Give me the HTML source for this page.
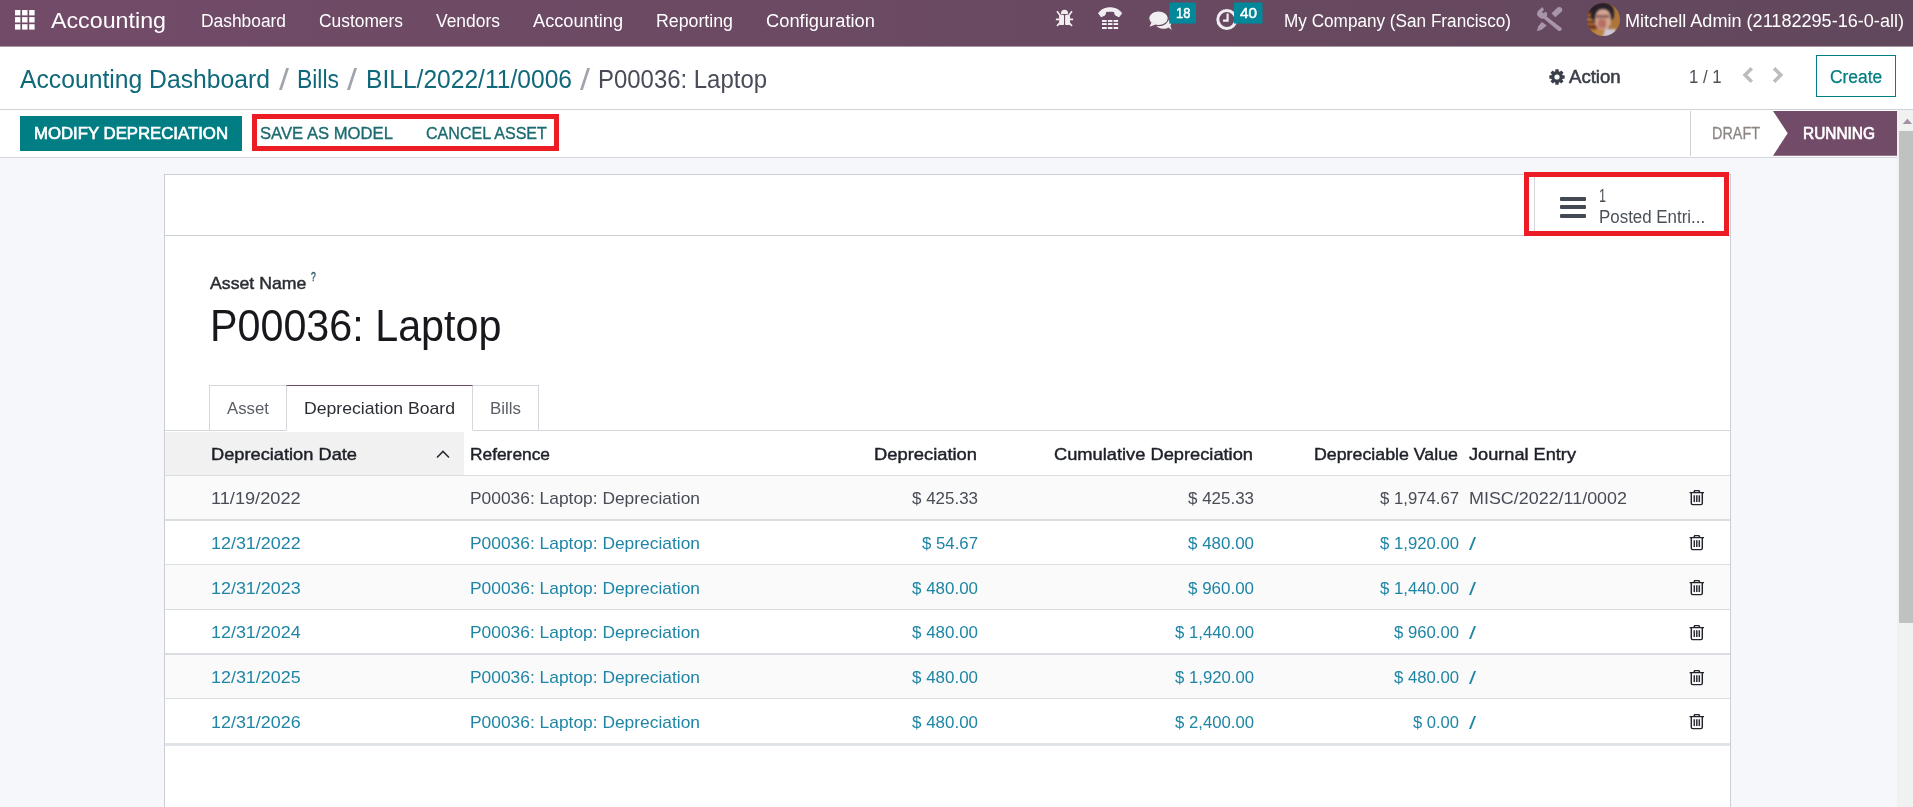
<!DOCTYPE html>
<html><head><meta charset="utf-8"><title>Odoo - P00036: Laptop</title>
<style>
*{box-sizing:border-box;margin:0;padding:0}
html,body{width:1913px;height:807px;overflow:hidden;background:#f6f7fa;font-family:"Liberation Sans",sans-serif;position:relative}
.a{position:absolute}
.t{position:absolute;white-space:pre;transform-origin:0 50%;font-family:"Liberation Sans",sans-serif}
#nav{left:0;top:0;width:1913px;height:46px;background:linear-gradient(90deg,#724b68 0%,#62485c 100%)}
#cp{left:0;top:47px;width:1913px;height:62px;background:#fff}
#navedge{left:0;top:46px;width:1913px;height:1px;background:linear-gradient(90deg,#ae98a8,#a697a3)}
#cpline{left:0;top:109px;width:1913px;height:1px;background:#d0d2d8}
#sb{left:0;top:110px;width:1897px;height:47px;background:#fff}
#sbline{left:0;top:157px;width:1897px;height:1px;background:#d5d7dc}
#btn1{left:20px;top:116px;width:221.8px;height:35px;background:#017e84}
#red1{left:252px;top:114px;width:307px;height:37px;border:5px solid #ec1c24}
#create{left:1816px;top:55px;width:80px;height:42px;border:1.5px solid #017e84;background:#fff}
#sbsep{left:1690px;top:111px;width:1px;height:45px;background:#d0d2d8}
#sheet{left:164.2px;top:174px;width:1566.8px;height:640px;background:#fff;border:1px solid #cbced5}
#bbline{left:165px;top:234.7px;width:1565px;height:1.2px;background:#cbced5}
#statsep{left:1534.3px;top:175px;width:1px;height:60px;background:#d5d7dc}
#red2{left:1524px;top:172px;width:205px;height:63.5px;border:5px solid #ec1c24}
.bar{left:1560.4px;width:25.8px;height:4px;background:#444a54;border-radius:1px}
#scroll{left:1897px;top:110px;width:16px;height:697px;background:#f1f1f1}
#thumb{left:1899px;top:131.2px;width:14px;height:491.4px;background:#c1c1c1}
.tab{top:385px;height:46.4px;border:1px solid #d5d7dc;background:#fff}
#tabline{left:165px;top:430.4px;width:1565px;height:1px;background:#d5d7dc}
#thbg{left:165px;top:431.5px;width:299px;height:43px;background:#f1f1f1}
.rl{left:165px;width:1565px;background:#dadde1}
.rb{left:165px;width:1565px;background:#fafafa}

</style></head>
<body>
<div class="a" id="nav"></div>
<div class="a" id="cp"></div>
<div class="a" id="navedge"></div>
<div class="a" id="cpline"></div>
<div class="a" id="sb"></div>
<div class="a" id="sbline"></div>
<div class="a" id="scroll"></div>
<div class="a" id="thumb"></div>
<svg class="a" style="left:1897px;top:110px" width="16" height="22" viewBox="0 0 16 22"><path d="M5.7 14 L10.4 8.8 L15.1 14 Z" fill="#a291a4"/></svg>
<!-- grid icon -->
<svg class="a" style="left:14.5px;top:9.5px" width="20" height="20" viewBox="0 0 20 20" fill="#fff">
<rect x="0" y="0" width="5.4" height="5.4"/><rect x="7.1" y="0" width="5.4" height="5.4"/><rect x="14.2" y="0" width="5.4" height="5.4"/>
<rect x="0" y="7.1" width="5.4" height="5.4"/><rect x="7.1" y="7.1" width="5.4" height="5.4"/><rect x="14.2" y="7.1" width="5.4" height="5.4"/>
<rect x="0" y="14.2" width="5.4" height="5.4"/><rect x="7.1" y="14.2" width="5.4" height="5.4"/><rect x="14.2" y="14.2" width="5.4" height="5.4"/>
</svg>
<div class="a" id="btn1"></div>
<div class="a" id="red1"></div>
<div class="a" id="create"></div>
<div class="a" id="sbsep"></div>
<!-- running arrow -->
<svg class="a" style="left:1773px;top:111px" width="124" height="45" viewBox="0 0 124 45"><path d="M0 0 H124 V44.7 H0 L14.7 22.3 Z" fill="#714b67"/></svg>
<div class="a" id="sheet"></div>
<div class="a" id="bbline"></div>
<div class="a" id="statsep"></div>
<div class="a bar" style="top:197px"></div>
<div class="a bar" style="top:205px"></div>
<div class="a bar" style="top:214px"></div>
<div class="a" id="red2"></div>
<!-- tabs -->
<div class="a tab" style="left:209px;width:78px"></div>
<div class="a tab" style="left:472px;width:66.7px"></div>
<div class="a" id="tabline"></div>
<div class="a tab" style="left:286px;width:187px;border-top:1.5px solid #714b67;border-bottom:1px solid #fff"></div>
<div class="a" id="thbg"></div>
<svg class="a" style="left:435px;top:446.6px" width="16" height="14" viewBox="0 0 16 14"><path d="M2 10.5 L8 4.5 L14 10.5" fill="none" stroke="#2a2d33" stroke-width="1.6"/></svg>
<!-- rows -->
<div class="a rb" style="top:476px;height:43px"></div>
<div class="a rb" style="top:565px;height:44px"></div>
<div class="a rb" style="top:655px;height:44px"></div>
<div class="a rl" style="top:475px;height:1px"></div>
<div class="a rl" style="top:518.6px;height:2px"></div>
<div class="a rl" style="top:564px;height:1px"></div>
<div class="a rl" style="top:609px;height:1px"></div>
<div class="a rl" style="top:653px;height:2px"></div>
<div class="a rl" style="top:698px;height:1px"></div>
<div class="a rl" style="top:743px;height:3.2px;background:#e0e3e8"></div>
<!-- NAV ICONS: drawn in page pixel coords using one overlay svg -->
<svg class="a" style="left:1040px;top:0" width="600" height="46" viewBox="1040 0 600 46">
 <!-- bug -->
 <g fill="#f1eef1" stroke="none">
  <path d="M1060.9 14 a3.6 4.2 0 0 1 7.2 0 z"/>
  <rect x="1059.1" y="14.7" width="4.9" height="10.4" rx="1.2"/>
  <rect x="1065.1" y="14.7" width="4.9" height="10.4" rx="1.2"/>
 </g>
 <g stroke="#f1eef1" stroke-width="1.7" stroke-linecap="butt" fill="none">
  <path d="M1055.9 19.3 H1059.5 M1069.5 19.3 H1073.1"/>
  <path d="M1057 11.2 L1060 15.2 M1072 11.2 L1069 15.2"/>
  <path d="M1057 26 L1060 22.6 M1072 26 L1069 22.6"/>
 </g>
 <!-- phone -->
 <path d="M1098.6 13.2 C1103 6 1117 6 1121.6 13.2 L1119 16.8 L1115.2 14.9 L1114.5 11.8 C1112 10.9 1108.2 10.9 1105.6 11.8 L1105 14.9 L1101.2 16.8 Z" fill="#f1eef1" stroke="#f1eef1" stroke-width="1" stroke-linejoin="round"/>
 <g fill="#f6f3f6">
  <rect x="1102" y="20" width="4.7" height="1.9"/><rect x="1107.9" y="20" width="4.5" height="1.9"/><rect x="1113.6" y="20" width="4.5" height="1.9"/>
  <rect x="1102" y="23.1" width="4.7" height="1.9"/><rect x="1107.9" y="23.1" width="4.5" height="1.9"/><rect x="1113.6" y="23.1" width="4.5" height="1.9"/>
  <rect x="1102" y="27" width="4.7" height="2"/><rect x="1107.9" y="27" width="4.5" height="2"/><rect x="1113.6" y="27" width="4.5" height="2"/>
 </g>
 <!-- chat bubbles -->
 <g fill="#f1eef1">
  <path d="M1156 24.5 C1156 28.5 1165 30 1168.5 27.5 L1171.8 30 L1170.4 26 C1172.5 23 1170 19.5 1166 19 Z"/>
  <ellipse cx="1158.5" cy="18.2" rx="9.8" ry="7.4" stroke="#65495e" stroke-width="1.2"/>
  <path d="M1151.5 22.5 L1149.6 26.7 L1155.5 24.6 Z"/>
 </g>
 <!-- clock -->
 <circle cx="1226.8" cy="19.5" r="9" fill="none" stroke="#f1eef1" stroke-width="3"/>
 <path d="M1227.6 13.6 V20.6 H1223" fill="none" stroke="#f1eef1" stroke-width="2.2"/>
 <!-- badges -->
 <rect x="1169.2" y="2.5" width="26.8" height="21.1" fill="#03879a"/>
 <rect x="1234" y="2.5" width="28.5" height="21.1" fill="#03879a"/>
 <!-- tools -->
 <g fill="#a995aa">
  <path d="M1539.5 9.5 L1542.5 7 L1544 9.8 L1542 12 L1543.5 13.3 L1546 11.5 C1547.2 13 1547.5 15.2 1546.6 16.6 L1561.6 28 C1562.6 29.6 1560.5 31.6 1558.6 31 L1543.6 18.6 C1541.2 19.4 1538.6 17.4 1537 14.8 C1536.8 12.8 1537.8 10.8 1539.5 9.5 Z"/>
  <path d="M1551.5 13.2 L1557.5 7.6 C1559 6.4 1561 7 1562 8.4 C1562.6 9.8 1562.2 11 1561 12.2 L1555.2 17.2 Z"/>
  <path d="M1541.8 22 L1546.8 25.6 L1541.6 29.8 L1536.8 31.2 L1538.4 26.2 Z"/>
 </g>
</svg>
<!-- avatar -->
<div class="a" style="left:1586.5px;top:3px;width:33.2px;height:33.2px;border-radius:50%;overflow:hidden;background:#7a4a30">
 <div class="a" style="left:-2px;top:-2px;width:38px;height:38px;filter:blur(0.9px)">
  <div class="a" style="left:0;top:0;width:13px;height:38px;background:linear-gradient(180deg,#3a1c1c 0 10px,#6a2a22 10px 13px,#a87840 13px 15.5px,#6a2a22 15.5px 17.5px,#a87840 17.5px 20px,#6a2a22 20px 22px,#a87840 22px 24px,#7a3524 24px 28px,#b07a38 28px 38px)"></div>
  <div class="a" style="left:25px;top:0;width:13px;height:38px;background:#ad7638"></div>
  <div class="a" style="left:6px;top:0.5px;width:23px;height:19px;background:#27202a;border-radius:50% 50% 25% 25%"></div>
  <div class="a" style="left:10.5px;top:8px;width:15.5px;height:22px;background:#d2a592;border-radius:42% 42% 48% 48%"></div>
  <div class="a" style="left:11.5px;top:14px;width:13px;height:2.6px;background:#5a2a2a;opacity:.55"></div>
  <div class="a" style="left:13.5px;top:17.5px;width:8px;height:9px;background:#9a3a34;border-radius:40%;opacity:.5"></div>
  <div class="a" style="left:18px;top:28px;width:11px;height:12px;background:#cfc7d6;transform:skewX(-18deg)"></div>
  <div class="a" style="left:9px;top:28px;width:9px;height:12px;background:#bd8448;transform:skewX(-18deg)"></div>
 </div>
</div>
<!-- gear -->
<svg class="a" style="left:1549px;top:68.5px" width="16" height="16" viewBox="-8 -8 16 16">
 <g fill="#3b3f49">
  <g id="tooth"><rect x="-1.7" y="-7.7" width="3.4" height="15.4" rx=".4"/></g>
  <rect x="-1.7" y="-7.7" width="3.4" height="15.4" rx=".4" transform="rotate(45)"/>
  <rect x="-1.7" y="-7.7" width="3.4" height="15.4" rx=".4" transform="rotate(90)"/>
  <rect x="-1.7" y="-7.7" width="3.4" height="15.4" rx=".4" transform="rotate(135)"/>
  <circle r="5.9"/>
 </g>
 <circle r="2.6" fill="#fff"/>
</svg>
<!-- chevrons -->
<svg class="a" style="left:1740px;top:64px" width="50" height="22" viewBox="1740 64 50 22">
 <path d="M1751.8 68.3 L1745 75 L1751.8 81.8" fill="none" stroke="#bcbcbc" stroke-width="3.5"/>
 <path d="M1774 68.3 L1780.8 75 L1774 81.8" fill="none" stroke="#bcbcbc" stroke-width="3.5"/>
</svg>
<svg class="a" style="left:1689px;top:489.2px" width="16" height="17" viewBox="0 0 16 17"><g fill="none" stroke="#22252c" stroke-width="1.45"><path d="M0.6 3.6 H15 M4.9 3.4 L5.7 1.6 H9.9 L10.7 3.4"/><path d="M2.3 4 V14.2 Q2.3 15.6 3.7 15.6 H11.9 Q13.3 15.6 13.3 14.2 V4"/></g><g stroke="#2a2d35" stroke-width="1.5"><path d="M5.3 6.3 V13 M7.8 6.3 V13 M10.3 6.3 V13"/></g></svg>
<svg class="a" style="left:1689px;top:534.3px" width="16" height="17" viewBox="0 0 16 17"><g fill="none" stroke="#22252c" stroke-width="1.45"><path d="M0.6 3.6 H15 M4.9 3.4 L5.7 1.6 H9.9 L10.7 3.4"/><path d="M2.3 4 V14.2 Q2.3 15.6 3.7 15.6 H11.9 Q13.3 15.6 13.3 14.2 V4"/></g><g stroke="#2a2d35" stroke-width="1.5"><path d="M5.3 6.3 V13 M7.8 6.3 V13 M10.3 6.3 V13"/></g></svg>
<svg class="a" style="left:1689px;top:579.2px" width="16" height="17" viewBox="0 0 16 17"><g fill="none" stroke="#22252c" stroke-width="1.45"><path d="M0.6 3.6 H15 M4.9 3.4 L5.7 1.6 H9.9 L10.7 3.4"/><path d="M2.3 4 V14.2 Q2.3 15.6 3.7 15.6 H11.9 Q13.3 15.6 13.3 14.2 V4"/></g><g stroke="#2a2d35" stroke-width="1.5"><path d="M5.3 6.3 V13 M7.8 6.3 V13 M10.3 6.3 V13"/></g></svg>
<svg class="a" style="left:1689px;top:623.5px" width="16" height="17" viewBox="0 0 16 17"><g fill="none" stroke="#22252c" stroke-width="1.45"><path d="M0.6 3.6 H15 M4.9 3.4 L5.7 1.6 H9.9 L10.7 3.4"/><path d="M2.3 4 V14.2 Q2.3 15.6 3.7 15.6 H11.9 Q13.3 15.6 13.3 14.2 V4"/></g><g stroke="#2a2d35" stroke-width="1.5"><path d="M5.3 6.3 V13 M7.8 6.3 V13 M10.3 6.3 V13"/></g></svg>
<svg class="a" style="left:1689px;top:668.5px" width="16" height="17" viewBox="0 0 16 17"><g fill="none" stroke="#22252c" stroke-width="1.45"><path d="M0.6 3.6 H15 M4.9 3.4 L5.7 1.6 H9.9 L10.7 3.4"/><path d="M2.3 4 V14.2 Q2.3 15.6 3.7 15.6 H11.9 Q13.3 15.6 13.3 14.2 V4"/></g><g stroke="#2a2d35" stroke-width="1.5"><path d="M5.3 6.3 V13 M7.8 6.3 V13 M10.3 6.3 V13"/></g></svg>
<svg class="a" style="left:1689px;top:713.3px" width="16" height="17" viewBox="0 0 16 17"><g fill="none" stroke="#22252c" stroke-width="1.45"><path d="M0.6 3.6 H15 M4.9 3.4 L5.7 1.6 H9.9 L10.7 3.4"/><path d="M2.3 4 V14.2 Q2.3 15.6 3.7 15.6 H11.9 Q13.3 15.6 13.3 14.2 V4"/></g><g stroke="#2a2d35" stroke-width="1.5"><path d="M5.3 6.3 V13 M7.8 6.3 V13 M10.3 6.3 V13"/></g></svg>

<span class="t" style="left:51px;top:5.8px;font-size:22.3px;line-height:29px;font-weight:400;color:#ffffff;transform:scaleX(1.0423);">Accounting</span>
<span class="t" style="left:200.5px;top:9.0px;font-size:18px;line-height:24px;font-weight:400;color:#ffffff;transform:scaleX(0.9652);">Dashboard</span>
<span class="t" style="left:319px;top:9.0px;font-size:18px;line-height:24px;font-weight:400;color:#ffffff;transform:scaleX(0.9652);">Customers</span>
<span class="t" style="left:436px;top:9.0px;font-size:18px;line-height:24px;font-weight:400;color:#ffffff;transform:scaleX(0.9688);">Vendors</span>
<span class="t" style="left:533px;top:9.0px;font-size:18px;line-height:24px;font-weight:400;color:#ffffff;transform:scaleX(1.0105);">Accounting</span>
<span class="t" style="left:656px;top:9.0px;font-size:18px;line-height:24px;font-weight:400;color:#ffffff;transform:scaleX(0.9866);">Reporting</span>
<span class="t" style="left:766px;top:9.0px;font-size:18px;line-height:24px;font-weight:400;color:#ffffff;transform:scaleX(1.0179);">Configuration</span>
<span class="t" style="left:1284px;top:9.0px;font-size:18px;line-height:24px;font-weight:400;color:#ffffff;transform:scaleX(0.9535);">My Company (San Francisco)</span>
<span class="t" style="left:1625px;top:9.0px;font-size:18px;line-height:24px;font-weight:400;color:#ffffff;transform:scaleX(1.0043);">Mitchell Admin (21182295-16-0-all)</span>
<span class="t" style="left:1176px;top:4.2px;font-size:14.5px;line-height:19px;font-weight:400;color:#ffffff;transform:scaleX(0.8860);-webkit-text-stroke:0.5px #fff;">18</span>
<span class="t" style="left:1239.8px;top:4.2px;font-size:14.5px;line-height:19px;font-weight:400;color:#ffffff;transform:scaleX(1.0532);-webkit-text-stroke:0.5px #fff;">40</span>
<span class="t" style="left:20px;top:62.6px;font-size:25px;line-height:32px;font-weight:400;color:#10697a;transform:scaleX(0.9883);">Accounting Dashboard</span>
<span class="t" style="left:279.3px;top:61.7px;font-size:29px;line-height:37px;font-weight:400;color:#a0a4ad;transform:scaleX(1.2403);">/</span>
<span class="t" style="left:297px;top:62.6px;font-size:25px;line-height:32px;font-weight:400;color:#10697a;transform:scaleX(0.9162);">Bills</span>
<span class="t" style="left:347.3px;top:61.7px;font-size:29px;line-height:37px;font-weight:400;color:#a0a4ad;transform:scaleX(1.2403);">/</span>
<span class="t" style="left:366px;top:62.6px;font-size:25px;line-height:32px;font-weight:400;color:#10697a;transform:scaleX(0.9835);">BILL/2022/11/0006</span>
<span class="t" style="left:580.3px;top:61.7px;font-size:29px;line-height:37px;font-weight:400;color:#a0a4ad;transform:scaleX(1.2403);">/</span>
<span class="t" style="left:598px;top:62.6px;font-size:25px;line-height:32px;font-weight:400;color:#484c58;transform:scaleX(0.9572);">P00036: Laptop</span>
<span class="t" style="left:1569.3px;top:66.1px;font-size:17.5px;line-height:23px;font-weight:400;color:#3a3e48;transform:scaleX(1.0629);-webkit-text-stroke:0.55px #3a3e48;">Action</span>
<span class="t" style="left:1688.8px;top:66.1px;font-size:17.5px;line-height:23px;font-weight:400;color:#4b4f58;transform:scaleX(0.9600);">1 / 1</span>
<span class="t" style="left:1830.2px;top:65.0px;font-size:18px;line-height:24px;font-weight:400;color:#017e84;transform:scaleX(0.9661);-webkit-text-stroke:0.25px #017e84;">Create</span>
<span class="t" style="left:34px;top:123.4px;font-size:16.9px;line-height:22px;font-weight:400;color:#fff;transform:scaleX(0.9922);-webkit-text-stroke:0.7px #fff;">MODIFY DEPRECIATION</span>
<span class="t" style="left:260.4px;top:123.4px;font-size:16.9px;line-height:22px;font-weight:400;color:#1c6a70;transform:scaleX(0.9854);-webkit-text-stroke:0.35px #1c6a70;">SAVE AS MODEL</span>
<span class="t" style="left:425.8px;top:123.4px;font-size:16.9px;line-height:22px;font-weight:400;color:#1c6a70;transform:scaleX(0.9516);-webkit-text-stroke:0.35px #1c6a70;">CANCEL ASSET</span>
<span class="t" style="left:1712px;top:123.4px;font-size:16.6px;line-height:22px;font-weight:400;color:#8c8682;transform:scaleX(0.8678);-webkit-text-stroke:0.3px #8c8682;">DRAFT</span>
<span class="t" style="left:1803px;top:123.4px;font-size:16.6px;line-height:22px;font-weight:400;color:#fff;transform:scaleX(0.9298);-webkit-text-stroke:0.7px #fff;">RUNNING</span>
<span class="t" style="left:1599.3px;top:185.0px;font-size:17.5px;line-height:23px;font-weight:400;color:#4b5058;transform:scaleX(0.7191);">1</span>
<span class="t" style="left:1599.3px;top:206.0px;font-size:17.5px;line-height:23px;font-weight:400;color:#4b5058;transform:scaleX(0.9661);">Posted Entri...</span>
<span class="t" style="left:209.6px;top:272.6px;font-size:17px;line-height:22px;font-weight:400;color:#2a2d33;transform:scaleX(1.0411);-webkit-text-stroke:0.45px #2a2d33;">Asset Name</span>
<span class="t" style="left:310.8px;top:269.3px;font-size:12.3px;line-height:17px;font-weight:400;color:#1f5560;transform:scaleX(0.7014);-webkit-text-stroke:0.35px #1f5560;">?</span>
<span class="t" style="left:209.7px;top:297.5px;font-size:44.4px;line-height:55px;font-weight:400;color:#16181c;transform:scaleX(0.9295);">P00036: Laptop</span>
<span class="t" style="left:227px;top:398.0px;font-size:17px;line-height:22px;font-weight:400;color:#5a5f66;transform:scaleX(0.9875);">Asset</span>
<span class="t" style="left:304px;top:398.0px;font-size:17px;line-height:22px;font-weight:400;color:#2a2d33;transform:scaleX(1.0376);">Depreciation Board</span>
<span class="t" style="left:490px;top:398.0px;font-size:17px;line-height:22px;font-weight:400;color:#5a5f66;transform:scaleX(0.9945);">Bills</span>
<span class="t" style="left:211px;top:443.6px;font-size:17px;line-height:22px;font-weight:400;color:#1e2128;transform:scaleX(1.0729);-webkit-text-stroke:0.45px #1e2128;">Depreciation Date</span>
<span class="t" style="left:470px;top:443.6px;font-size:17px;line-height:22px;font-weight:400;color:#1e2128;transform:scaleX(1.0199);-webkit-text-stroke:0.45px #1e2128;">Reference</span>
<span class="t" style="left:874px;top:443.6px;font-size:17px;line-height:22px;font-weight:400;color:#1e2128;transform:scaleX(1.0791);-webkit-text-stroke:0.45px #1e2128;">Depreciation</span>
<span class="t" style="left:1054px;top:443.6px;font-size:17px;line-height:22px;font-weight:400;color:#1e2128;transform:scaleX(1.0745);-webkit-text-stroke:0.45px #1e2128;">Cumulative Depreciation</span>
<span class="t" style="left:1314px;top:443.6px;font-size:17px;line-height:22px;font-weight:400;color:#1e2128;transform:scaleX(1.0460);-webkit-text-stroke:0.45px #1e2128;">Depreciable Value</span>
<span class="t" style="left:1469px;top:443.6px;font-size:17px;line-height:22px;font-weight:400;color:#1e2128;transform:scaleX(1.0682);-webkit-text-stroke:0.45px #1e2128;">Journal Entry</span>
<span class="t" style="left:211px;top:487.5px;font-size:17px;line-height:22px;font-weight:400;color:#484c56;transform:scaleX(1.0689);">11/19/2022</span>
<span class="t" style="left:470px;top:487.5px;font-size:17px;line-height:22px;font-weight:400;color:#484c56;transform:scaleX(1.0224);">P00036: Laptop: Depreciation</span>
<span class="t" style="left:912px;top:487.5px;font-size:17px;line-height:22px;font-weight:400;color:#484c56;transform:scaleX(0.9972);">$ 425.33</span>
<span class="t" style="left:1188px;top:487.5px;font-size:17px;line-height:22px;font-weight:400;color:#484c56;transform:scaleX(0.9972);">$ 425.33</span>
<span class="t" style="left:1380px;top:487.5px;font-size:17px;line-height:22px;font-weight:400;color:#484c56;transform:scaleX(0.9831);">$ 1,974.67</span>
<span class="t" style="left:1469px;top:487.5px;font-size:17px;line-height:22px;font-weight:400;color:#484c56;transform:scaleX(1.0536);">MISC/2022/11/0002</span>
<span class="t" style="left:211px;top:532.5px;font-size:17px;line-height:22px;font-weight:400;color:#1f85a5;transform:scaleX(1.0530);">12/31/2022</span>
<span class="t" style="left:470px;top:532.5px;font-size:17px;line-height:22px;font-weight:400;color:#1f85a5;transform:scaleX(1.0224);">P00036: Laptop: Depreciation</span>
<span class="t" style="left:922px;top:532.5px;font-size:17px;line-height:22px;font-weight:400;color:#1f85a5;transform:scaleX(0.9871);">$ 54.67</span>
<span class="t" style="left:1188px;top:532.5px;font-size:17px;line-height:22px;font-weight:400;color:#1f85a5;transform:scaleX(0.9972);">$ 480.00</span>
<span class="t" style="left:1380px;top:532.5px;font-size:17px;line-height:22px;font-weight:400;color:#1f85a5;transform:scaleX(0.9831);">$ 1,920.00</span>
<span class="t" style="left:1469px;top:531.5px;font-size:18.5px;line-height:24px;font-weight:400;color:#1f85a5;transform:scaleX(1.3617);">/</span>
<span class="t" style="left:211px;top:577.5px;font-size:17px;line-height:22px;font-weight:400;color:#1f85a5;transform:scaleX(1.0530);">12/31/2023</span>
<span class="t" style="left:470px;top:577.5px;font-size:17px;line-height:22px;font-weight:400;color:#1f85a5;transform:scaleX(1.0224);">P00036: Laptop: Depreciation</span>
<span class="t" style="left:912px;top:577.5px;font-size:17px;line-height:22px;font-weight:400;color:#1f85a5;transform:scaleX(0.9972);">$ 480.00</span>
<span class="t" style="left:1188px;top:577.5px;font-size:17px;line-height:22px;font-weight:400;color:#1f85a5;transform:scaleX(0.9972);">$ 960.00</span>
<span class="t" style="left:1380px;top:577.5px;font-size:17px;line-height:22px;font-weight:400;color:#1f85a5;transform:scaleX(0.9831);">$ 1,440.00</span>
<span class="t" style="left:1469px;top:576.5px;font-size:18.5px;line-height:24px;font-weight:400;color:#1f85a5;transform:scaleX(1.3617);">/</span>
<span class="t" style="left:211px;top:621.5px;font-size:17px;line-height:22px;font-weight:400;color:#1f85a5;transform:scaleX(1.0530);">12/31/2024</span>
<span class="t" style="left:470px;top:621.5px;font-size:17px;line-height:22px;font-weight:400;color:#1f85a5;transform:scaleX(1.0224);">P00036: Laptop: Depreciation</span>
<span class="t" style="left:912px;top:621.5px;font-size:17px;line-height:22px;font-weight:400;color:#1f85a5;transform:scaleX(0.9972);">$ 480.00</span>
<span class="t" style="left:1175px;top:621.5px;font-size:17px;line-height:22px;font-weight:400;color:#1f85a5;transform:scaleX(0.9831);">$ 1,440.00</span>
<span class="t" style="left:1394px;top:621.5px;font-size:17px;line-height:22px;font-weight:400;color:#1f85a5;transform:scaleX(0.9821);">$ 960.00</span>
<span class="t" style="left:1469px;top:620.5px;font-size:18.5px;line-height:24px;font-weight:400;color:#1f85a5;transform:scaleX(1.3617);">/</span>
<span class="t" style="left:211px;top:666.5px;font-size:17px;line-height:22px;font-weight:400;color:#1f85a5;transform:scaleX(1.0530);">12/31/2025</span>
<span class="t" style="left:470px;top:666.5px;font-size:17px;line-height:22px;font-weight:400;color:#1f85a5;transform:scaleX(1.0224);">P00036: Laptop: Depreciation</span>
<span class="t" style="left:912px;top:666.5px;font-size:17px;line-height:22px;font-weight:400;color:#1f85a5;transform:scaleX(0.9972);">$ 480.00</span>
<span class="t" style="left:1175px;top:666.5px;font-size:17px;line-height:22px;font-weight:400;color:#1f85a5;transform:scaleX(0.9831);">$ 1,920.00</span>
<span class="t" style="left:1394px;top:666.5px;font-size:17px;line-height:22px;font-weight:400;color:#1f85a5;transform:scaleX(0.9821);">$ 480.00</span>
<span class="t" style="left:1469px;top:665.5px;font-size:18.5px;line-height:24px;font-weight:400;color:#1f85a5;transform:scaleX(1.3617);">/</span>
<span class="t" style="left:211px;top:711.5px;font-size:17px;line-height:22px;font-weight:400;color:#1f85a5;transform:scaleX(1.0530);">12/31/2026</span>
<span class="t" style="left:470px;top:711.5px;font-size:17px;line-height:22px;font-weight:400;color:#1f85a5;transform:scaleX(1.0224);">P00036: Laptop: Depreciation</span>
<span class="t" style="left:912px;top:711.5px;font-size:17px;line-height:22px;font-weight:400;color:#1f85a5;transform:scaleX(0.9972);">$ 480.00</span>
<span class="t" style="left:1175px;top:711.5px;font-size:17px;line-height:22px;font-weight:400;color:#1f85a5;transform:scaleX(0.9831);">$ 2,400.00</span>
<span class="t" style="left:1413px;top:711.5px;font-size:17px;line-height:22px;font-weight:400;color:#1f85a5;transform:scaleX(0.9732);">$ 0.00</span>
<span class="t" style="left:1469px;top:710.5px;font-size:18.5px;line-height:24px;font-weight:400;color:#1f85a5;transform:scaleX(1.3617);">/</span>
</body></html>
